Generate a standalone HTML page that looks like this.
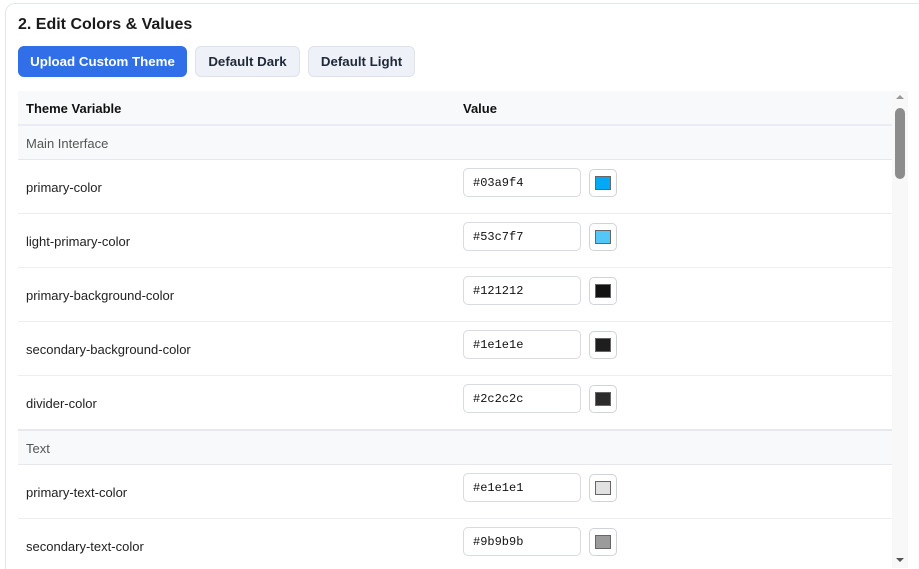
<!DOCTYPE html><html><head><style>
html,body{margin:0;width:919px;height:568px;overflow:hidden;background:#fff;font-family:"Liberation Sans",sans-serif;}
.card{position:absolute;left:5px;top:3px;width:940px;height:565px;border:1px solid #e3e6ee;border-bottom:none;border-radius:10px 10px 0 0;background:#fff}
h2{position:absolute;left:18px;top:16px;margin:0;font-size:16px;font-weight:bold;color:#1a1a1a}
.btn{position:absolute;top:46px;height:31px;line-height:31px;border-radius:6px;font-size:13.3px;font-weight:bold;text-align:center;box-sizing:border-box}
.b1{left:18px;width:169px;background:#306fe8;color:#fff}
.b2{left:195px;width:105px;background:#eef1f8;border:1px solid #dde2ee;color:#1f2937;line-height:29px}
.b3{left:308px;width:107px;background:#eef1f8;border:1px solid #dde2ee;color:#1f2937;line-height:29px}
.tbl{position:absolute;left:18px;top:91px;width:874px}
.row{position:relative;height:53px;border-bottom:1px solid #eceef2;font-size:13px;color:#222}
.row .n{position:absolute;left:8px;top:20px}
.hd{height:33px;background:#f8f9fb;border-bottom:2px solid #e9ecf2;font-weight:bold;font-size:13px;color:#111;position:relative}
.grp{height:33px;background:#f8f9fb;border-bottom:1px solid #e6e8ee;position:relative;font-size:13px;color:#555}
.inp{position:absolute;left:445px;top:8px;width:118px;height:29px;box-sizing:border-box;border:1px solid #d8dbe2;border-radius:5px;font-family:"Liberation Mono",monospace;font-size:12px;padding:7px 0 0 9px;color:#111}
.sw{position:absolute;left:571px;top:9px;width:28px;height:28px;box-sizing:border-box;border:1px solid #d0d3da;border-radius:5px;background:#fff}
.sw i{position:absolute;left:5px;top:6px;width:16px;height:14px;border:1px solid #666;box-sizing:border-box}
.sb{position:absolute;left:892px;top:91px;width:16px;height:477px;background:#f8f8f8}
.th{position:absolute;left:895px;top:108px;width:10px;height:71px;border-radius:5px;background:#8c8c8c}
</style></head><body>
<div class="card"></div>
<h2>2. Edit Colors &amp; Values</h2>
<div class="btn b1">Upload Custom Theme</div>
<div class="btn b2">Default Dark</div>
<div class="btn b3">Default Light</div>
<div class="tbl">
<div class="hd"><span style="position:absolute;left:8px;top:10px">Theme Variable</span><span style="position:absolute;left:445px;top:10px">Value</span></div>
<div class="grp"><span style="position:absolute;left:8px;top:10px">Main Interface</span></div>
<div class="row"><span class="n">primary-color</span><div class="inp">#03a9f4</div><div class="sw"><i style="background:#03a9f4"></i></div></div>
<div class="row"><span class="n">light-primary-color</span><div class="inp">#53c7f7</div><div class="sw"><i style="background:#53c7f7"></i></div></div>
<div class="row"><span class="n">primary-background-color</span><div class="inp">#121212</div><div class="sw"><i style="background:#121212"></i></div></div>
<div class="row"><span class="n">secondary-background-color</span><div class="inp">#1e1e1e</div><div class="sw"><i style="background:#1e1e1e"></i></div></div>
<div class="row" style="border-bottom:2px solid #e6e8ee"><span class="n">divider-color</span><div class="inp">#2c2c2c</div><div class="sw"><i style="background:#2c2c2c"></i></div></div>
<div class="grp"><span style="position:absolute;left:8px;top:10px">Text</span></div>
<div class="row"><span class="n">primary-text-color</span><div class="inp">#e1e1e1</div><div class="sw"><i style="background:#e1e1e1"></i></div></div>
<div class="row" style="height:50px;border-bottom:none"><span class="n">secondary-text-color</span><div class="inp">#9b9b9b</div><div class="sw"><i style="background:#9b9b9b"></i></div></div>
</div>
<div class="sb"></div><div class="th"></div>
<div style="position:absolute;left:896px;top:95px;border:4px solid transparent;border-bottom:4px solid #999;border-top:0;width:0"></div>
<div style="position:absolute;left:896px;top:558px;border:4px solid transparent;border-top:4px solid #555;border-bottom:0;width:0"></div>
</body></html>
